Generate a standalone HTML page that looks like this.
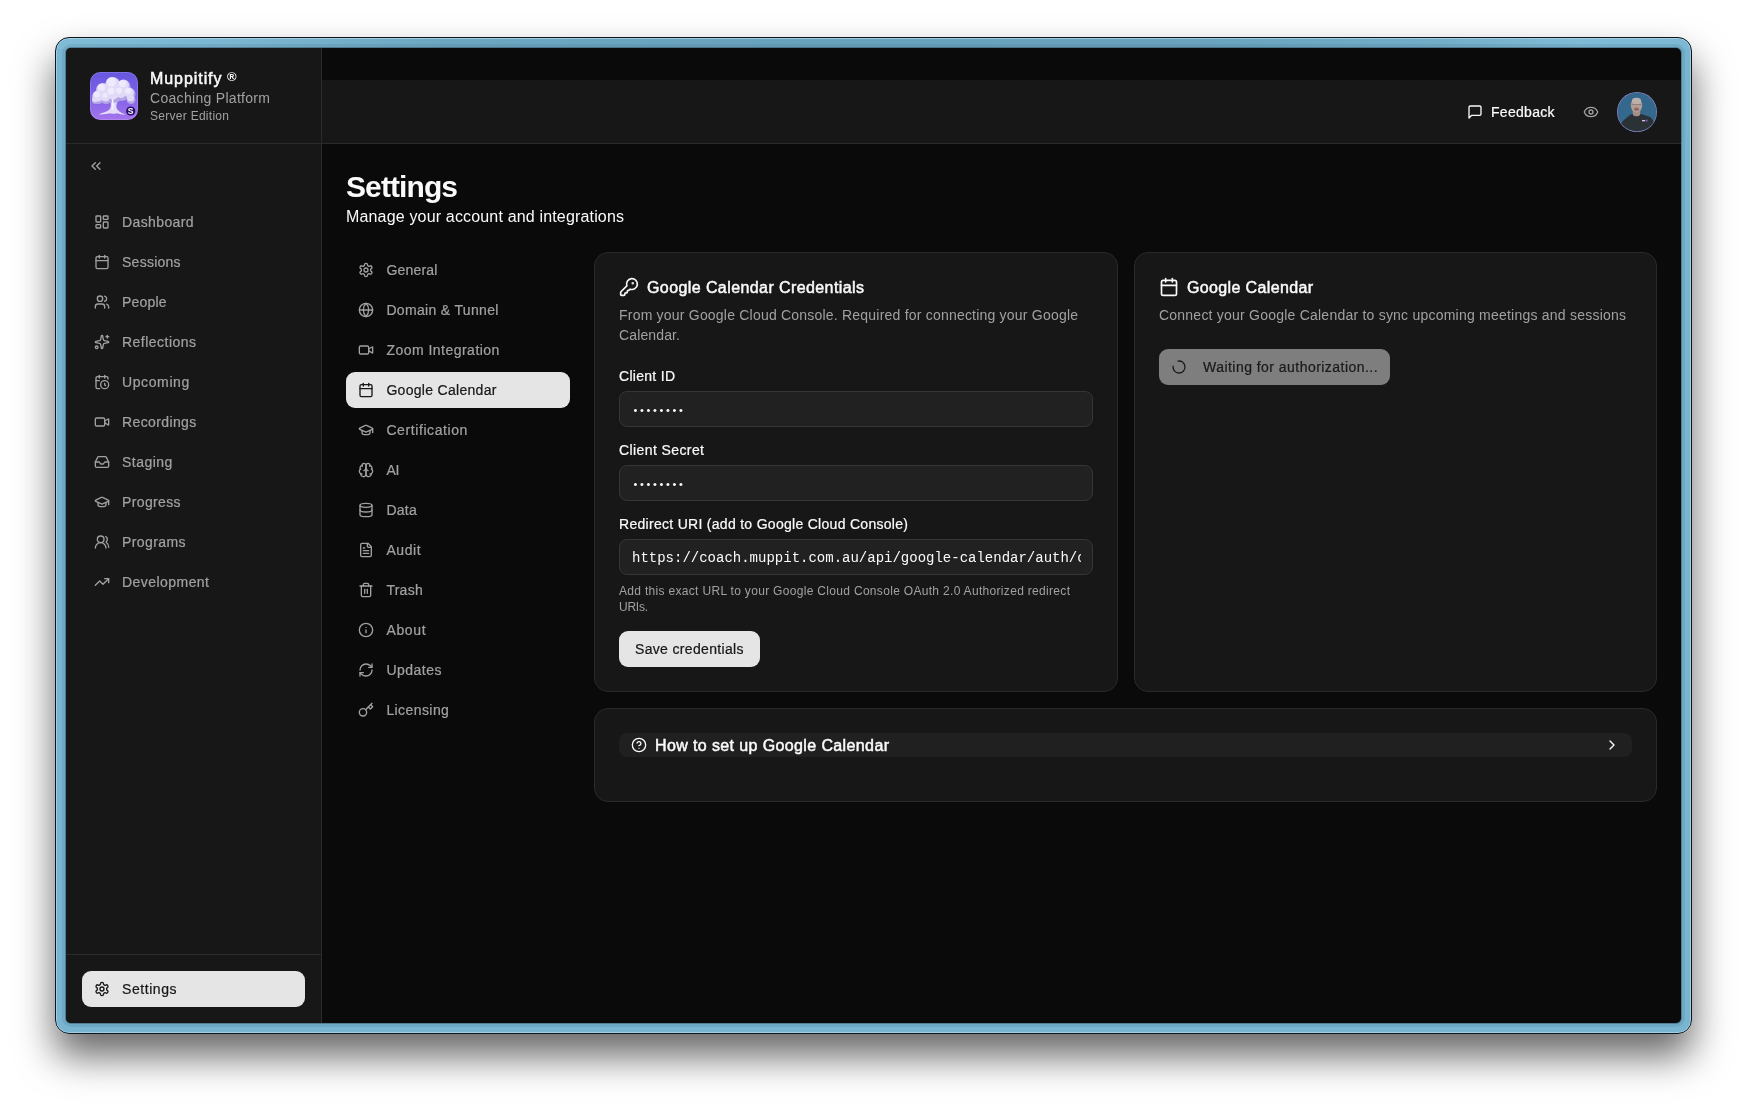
<!DOCTYPE html>
<html lang="en">
<head>
<meta charset="utf-8">
<title>Settings - Muppitify</title>
<style>
*{box-sizing:border-box;margin:0;padding:0}
html,body{width:1747px;height:1107px;overflow:hidden;background:#fff;font-family:"Liberation Sans",sans-serif}
body{position:relative}
svg.i{position:absolute;fill:none;stroke:currentColor;stroke-width:2;stroke-linecap:round;stroke-linejoin:round}
.t{position:absolute;white-space:nowrap;line-height:20px}
#shadow{position:absolute;left:55px;top:37px;width:1637px;height:997px;border-radius:14px;box-shadow:0 22px 38px rgba(0,0,0,.6)}
#frame{position:absolute;left:55px;top:37px;width:1637px;height:997px;border-radius:14px;background:linear-gradient(90deg,#80bbd6 0%,#7cb7d2 10%,#6da6c1 24%,#69a2bd 45%,#6aa3be 70%,#72acc7 84%,#80bbd6 93%,#7cb7d3 100%) 0 0/100% 11px no-repeat,#79b4d0;border:1px solid #10161c;box-shadow:inset 0 0 0 1px rgba(175,215,235,.75)}
#win{position:absolute;left:66px;top:48px;width:1615px;height:975px;border-radius:5px;background:#0a0a0a;overflow:hidden;color:#fafafa;box-shadow:0 0 0 1px rgba(10,30,40,.3),0 0 0 4px rgba(60,105,130,.16)}
#page{position:absolute;left:-66px;top:-48px;width:1747px;height:1107px;will-change:transform}
#side{position:absolute;left:66px;top:48px;width:256px;height:975px;background:#171717;border-right:1px solid #2b2b2b}
#sidehead{position:absolute;left:0;top:0;width:255px;height:96px;border-bottom:1px solid #2b2b2b}
#sidefoot{position:absolute;left:0;top:906px;width:255px;height:69px;border-top:1px solid #2b2b2b}
#top{position:absolute;left:322px;top:80px;width:1359px;height:64px;background:#171717;border-bottom:1px solid #2b2b2b}
.card{position:absolute;background:#171717;border:1px solid #2a2a2a;border-radius:14px}
.inp{position:absolute;background:#212121;border:1px solid #363636;border-radius:8px;height:36px}
</style>
</head>
<body>
<div id="shadow"></div>
<div id="frame"></div>
<div id="win"><div id="page">
<div id="side"><div id="sidehead"></div><div id="sidefoot"></div></div><div id="top"></div>
<svg id="logo" viewBox="0 0 48 48" style="position:absolute;left:90px;top:72px;width:48px;height:48px">
<defs><linearGradient id="lg" x1="0" y1="0" x2="0" y2="1"><stop offset="0" stop-color="#6658df"/><stop offset=".5" stop-color="#7d61e6"/><stop offset="1" stop-color="#a574ee"/></linearGradient>
<filter id="bl" x="-10%" y="-10%" width="120%" height="120%"><feGaussianBlur stdDeviation=".55"/></filter></defs>
<rect width="48" height="48" rx="10.500" fill="url(#lg)"/>
<g filter="url(#bl)">
<path d="M19.500 26C21 31 21.500 34 20 37 17 40 12 41 8.500 42.300c4.500.3 8.500-.3 11.500-1.100 2 .8 5 .8 7 .1 3 1 6 1.500 8.500 1.300C32 41 28.500 39.500 27 37c-1.500-3.500 0-7 3-10.500z" fill="#e4dbf8"/>
<g fill="#b3a4e6"><circle cx="8.500" cy="25.500" r="6.500"/><circle cx="13" cy="18.500" r="7"/><circle cx="23" cy="13.500" r="8"/><circle cx="34" cy="14.500" r="6.500"/><circle cx="39.500" cy="22" r="6"/><circle cx="41" cy="27.500" r="4.500"/><circle cx="24" cy="23" r="8"/><circle cx="32" cy="23" r="6"/><circle cx="16" cy="26.500" r="5.500"/><circle cx="5.500" cy="28.500" r="3.500"/></g>
<g fill="#e1daf7"><circle cx="8" cy="24" r="5.500"/><circle cx="12.500" cy="17" r="6"/><circle cx="22.500" cy="12" r="7"/><circle cx="33.500" cy="13" r="5.500"/><circle cx="39" cy="20.500" r="5"/><circle cx="40.500" cy="26" r="3.500"/><circle cx="23" cy="21" r="6.500"/><circle cx="31" cy="21" r="5"/><circle cx="15.500" cy="25" r="4.500"/><circle cx="5" cy="27.500" r="2.800"/></g>
<g fill="#eee9fb"><circle cx="7" cy="22.500" r="3"/><circle cx="11.500" cy="15.500" r="3.500"/><circle cx="21.500" cy="10" r="4.500"/><circle cx="32.500" cy="11.500" r="3.500"/><circle cx="38" cy="19" r="3"/><circle cx="21" cy="19" r="3.500"/><circle cx="29" cy="18.500" r="3"/><circle cx="15" cy="23.500" r="2.500"/></g>
<path d="M22.500 27c.8 4 .8 7-.2 10.500" stroke="#f6f2fd" stroke-width="1.600" fill="none"/>
</g>
<rect x=".4" y=".4" width="47.200" height="47.200" rx="10.100" fill="none" stroke="rgba(255,255,255,.22)" stroke-width=".8"/>
<circle cx="40.700" cy="39" r="4.600" fill="#2a0e66"/>
<text x="40.700" y="41.900" font-family="Liberation Sans, sans-serif" font-size="8.500" font-weight="700" fill="#fff" text-anchor="middle">S</text>
</svg>
<div class="t" id="brand" style="left:150px;top:69px;font-size:16px;font-weight:400;color:#fafafa;line-height:20px;letter-spacing:0.934px;-webkit-text-stroke:.5px #fafafa;">Muppitify</div>
<div class="t" id="reg" style="left:227px;top:67px;font-size:13px;font-weight:700;color:#fafafa;line-height:20px;letter-spacing:0.000px;">®</div>
<div class="t" id="brand2" style="left:150px;top:88px;font-size:14px;font-weight:400;color:#a1a1a1;line-height:20px;letter-spacing:0.302px;">Coaching Platform</div>
<div class="t" id="brand3" style="left:150px;top:108px;font-size:12px;font-weight:400;color:#a1a1a1;line-height:16px;letter-spacing:0.279px;">Server Edition</div>
<svg class="i" viewBox="0 0 24 24" style="left:88px;top:158px;width:16px;height:16px;color:#a1a1a1;stroke-width:2"><path d="m11 17-5-5 5-5"/><path d="m18 17-5-5 5-5"/></svg>
<svg class="i" viewBox="0 0 24 24" style="left:94px;top:214px;width:16px;height:16px;color:#a1a1a1;stroke-width:2"><rect width="7" height="9" x="3" y="3" rx="1"/><rect width="7" height="5" x="14" y="3" rx="1"/><rect width="7" height="9" x="14" y="12" rx="1"/><rect width="7" height="5" x="3" y="16" rx="1"/></svg>
<div class="t" id="s0" style="left:122px;top:212px;font-size:14px;font-weight:500;color:#a1a1a1;line-height:20px;letter-spacing:0.387px;-webkit-text-stroke:.22px #a1a1a1;">Dashboard</div>
<svg class="i" viewBox="0 0 24 24" style="left:94px;top:254px;width:16px;height:16px;color:#a1a1a1;stroke-width:2"><path d="M8 2v4"/><path d="M16 2v4"/><rect width="18" height="18" x="3" y="4" rx="2"/><path d="M3 10h18"/></svg>
<div class="t" id="s1" style="left:122px;top:252px;font-size:14px;font-weight:500;color:#a1a1a1;line-height:20px;letter-spacing:0.255px;-webkit-text-stroke:.22px #a1a1a1;">Sessions</div>
<svg class="i" viewBox="0 0 24 24" style="left:94px;top:294px;width:16px;height:16px;color:#a1a1a1;stroke-width:2"><path d="M16 21v-2a4 4 0 0 0-4-4H6a4 4 0 0 0-4 4v2"/><circle cx="9" cy="7" r="4"/><path d="M22 21v-2a4 4 0 0 0-3-3.870"/><path d="M16 3.130a4 4 0 0 1 0 7.750"/></svg>
<div class="t" id="s2" style="left:122px;top:292px;font-size:14px;font-weight:500;color:#a1a1a1;line-height:20px;letter-spacing:0.201px;-webkit-text-stroke:.22px #a1a1a1;">People</div>
<svg class="i" viewBox="0 0 24 24" style="left:94px;top:334px;width:16px;height:16px;color:#a1a1a1;stroke-width:2"><path d="M11.017 2.814a1 1 0 0 1 1.966 0l1.051 5.558a2 2 0 0 0 1.594 1.594l5.558 1.051a1 1 0 0 1 0 1.966l-5.558 1.051a2 2 0 0 0-1.594 1.594l-1.051 5.558a1 1 0 0 1-1.966 0l-1.051-5.558a2 2 0 0 0-1.594-1.594l-5.558-1.051a1 1 0 0 1 0-1.966l5.558-1.051a2 2 0 0 0 1.594-1.594z"/><path d="M20 2v4"/><path d="M22 4h-4"/><circle cx="4" cy="20" r="2"/></svg>
<div class="t" id="s3" style="left:122px;top:332px;font-size:14px;font-weight:500;color:#a1a1a1;line-height:20px;letter-spacing:0.473px;-webkit-text-stroke:.22px #a1a1a1;">Reflections</div>
<svg class="i" viewBox="0 0 24 24" style="left:94px;top:374px;width:16px;height:16px;color:#a1a1a1;stroke-width:2"><path d="M21 7.500V6a2 2 0 0 0-2-2H5a2 2 0 0 0-2 2v14a2 2 0 0 0 2 2h3.500"/><path d="M16 2v4"/><path d="M8 2v4"/><path d="M3 10h5"/><path d="M17.500 17.500 16 16.300V14"/><circle cx="16" cy="16" r="6"/></svg>
<div class="t" id="s4" style="left:122px;top:372px;font-size:14px;font-weight:500;color:#a1a1a1;line-height:20px;letter-spacing:0.610px;-webkit-text-stroke:.22px #a1a1a1;">Upcoming</div>
<svg class="i" viewBox="0 0 24 24" style="left:94px;top:414px;width:16px;height:16px;color:#a1a1a1;stroke-width:2"><path d="m16 13 5.223 3.482a.5.5 0 0 0 .777-.416V7.870a.5.5 0 0 0-.752-.432L16 10.500"/><rect x="2" y="6" width="14" height="12" rx="2"/></svg>
<div class="t" id="s5" style="left:122px;top:412px;font-size:14px;font-weight:500;color:#a1a1a1;line-height:20px;letter-spacing:0.386px;-webkit-text-stroke:.22px #a1a1a1;">Recordings</div>
<svg class="i" viewBox="0 0 24 24" style="left:94px;top:454px;width:16px;height:16px;color:#a1a1a1;stroke-width:2"><polyline points="22 12 16 12 14 15 10 15 8 12 2 12"/><path d="M5.450 5.110 2 12v6a2 2 0 0 0 2 2h16a2 2 0 0 0 2-2v-6l-3.450-6.890A2 2 0 0 0 16.760 4H7.240a2 2 0 0 0-1.790 1.110z"/></svg>
<div class="t" id="s6" style="left:122px;top:452px;font-size:14px;font-weight:500;color:#a1a1a1;line-height:20px;letter-spacing:0.469px;-webkit-text-stroke:.22px #a1a1a1;">Staging</div>
<svg class="i" viewBox="0 0 24 24" style="left:94px;top:494px;width:16px;height:16px;color:#a1a1a1;stroke-width:2"><path d="M21.420 10.922a1 1 0 0 0-.019-1.838L12.830 5.180a2 2 0 0 0-1.660 0L2.600 9.080a1 1 0 0 0 0 1.832l8.570 3.908a2 2 0 0 0 1.660 0z"/><path d="M22 10v6"/><path d="M6 12.500V16a6 3 0 0 0 12 0v-3.500"/></svg>
<div class="t" id="s7" style="left:122px;top:492px;font-size:14px;font-weight:500;color:#a1a1a1;line-height:20px;letter-spacing:0.367px;-webkit-text-stroke:.22px #a1a1a1;">Progress</div>
<svg class="i" viewBox="0 0 24 24" style="left:94px;top:534px;width:16px;height:16px;color:#a1a1a1;stroke-width:2"><path d="M18 21a8 8 0 0 0-16 0"/><circle cx="10" cy="8" r="5"/><path d="M22 20c0-3.370-2-6.500-4-8a5 5 0 0 0-.450-8.300"/></svg>
<div class="t" id="s8" style="left:122px;top:532px;font-size:14px;font-weight:500;color:#a1a1a1;line-height:20px;letter-spacing:0.416px;-webkit-text-stroke:.22px #a1a1a1;">Programs</div>
<svg class="i" viewBox="0 0 24 24" style="left:94px;top:574px;width:16px;height:16px;color:#a1a1a1;stroke-width:2"><polyline points="22 7 13.500 15.500 8.500 10.500 2 17"/><polyline points="16 7 22 7 22 13"/></svg>
<div class="t" id="s9" style="left:122px;top:572px;font-size:14px;font-weight:500;color:#a1a1a1;line-height:20px;letter-spacing:0.450px;-webkit-text-stroke:.22px #a1a1a1;">Development</div>
<div style="position:absolute;left:82px;top:971px;width:223px;height:36px;border-radius:9px;background:#e5e5e5"></div>
<svg class="i" viewBox="0 0 24 24" style="left:94px;top:981px;width:16px;height:16px;color:#171717;stroke-width:2"><path d="M12.220 2h-.440a2 2 0 0 0-2 2v.180a2 2 0 0 1-1 1.730l-.430.250a2 2 0 0 1-2 0l-.150-.080a2 2 0 0 0-2.730.730l-.220.380a2 2 0 0 0 .730 2.730l.150.100a2 2 0 0 1 1 1.720v.510a2 2 0 0 1-1 1.740l-.150.090a2 2 0 0 0-.730 2.730l.220.380a2 2 0 0 0 2.730.730l.150-.080a2 2 0 0 1 2 0l.430.250a2 2 0 0 1 1 1.730V20a2 2 0 0 0 2 2h.440a2 2 0 0 0 2-2v-.180a2 2 0 0 1 1-1.730l.430-.250a2 2 0 0 1 2 0l.150.080a2 2 0 0 0 2.730-.730l.220-.390a2 2 0 0 0-.730-2.730l-.150-.080a2 2 0 0 1-1-1.740v-.500a2 2 0 0 1 1-1.740l.150-.090a2 2 0 0 0 .730-2.730l-.220-.380a2 2 0 0 0-2.730-.730l-.150.080a2 2 0 0 1-2 0l-.430-.250a2 2 0 0 1-1-1.730V4a2 2 0 0 0-2-2z"/><circle cx="12" cy="12" r="3"/></svg>
<div class="t" id="sset" style="left:122px;top:979px;font-size:14px;font-weight:500;color:#171717;line-height:20px;letter-spacing:0.558px;-webkit-text-stroke:.22px #171717;">Settings</div>
<svg class="i" viewBox="0 0 24 24" style="left:1466.5px;top:104px;width:16px;height:16px;color:#fafafa;stroke-width:2"><path d="M21 15a2 2 0 0 1-2 2H7l-4 4V5a2 2 0 0 1 2-2h14a2 2 0 0 1 2 2z"/></svg>
<div class="t" id="feedback" style="left:1491px;top:102px;font-size:14px;font-weight:500;color:#fafafa;line-height:20px;letter-spacing:0.288px;-webkit-text-stroke:.22px #fafafa;">Feedback</div>
<svg class="i" viewBox="0 0 24 24" style="left:1583px;top:104px;width:16px;height:16px;color:#a1a1a1;stroke-width:2"><path d="M2.062 12.348a1 1 0 0 1 0-.696 10.750 10.750 0 0 1 19.876 0 1 1 0 0 1 0 .696 10.750 10.750 0 0 1-19.876 0"/><circle cx="12" cy="12" r="3"/></svg>
<svg id="avatar" viewBox="0 0 40 40" style="position:absolute;left:1617px;top:92px;width:40px;height:40px">
<defs><clipPath id="ac"><circle cx="20" cy="20" r="19.300"/></clipPath><filter id="ab" x="-10%" y="-10%" width="120%" height="120%"><feGaussianBlur stdDeviation=".5"/></filter></defs>
<circle cx="20" cy="20" r="20" fill="#8c84c8"/>
<g clip-path="url(#ac)"><rect width="40" height="40" fill="#35688d"/>
<g filter="url(#ab)">
<path d="M2 41C2.500 34 4 30.500 7 28L13.500 22.600 16 21.800c1.500 2.600 6 2.600 7.500 0L26 22.400 33 25C36.500 27 38 33 38 41z" fill="#2c3036"/>
<path d="M15.800 18h7.400v4.800c-1.500 2-5.900 2-7.400 0z" fill="#a18e87"/>
<ellipse cx="19.500" cy="13.400" rx="5.700" ry="7.300" fill="#b29c93"/>
<ellipse cx="19.500" cy="9" rx="4.600" ry="3.200" fill="#bcb0ab"/>
<path d="M14.500 12.500h10" stroke="#7d7475" stroke-width=".7"/>
<ellipse cx="19.500" cy="17.200" rx="2.600" ry="1.600" fill="#8a6b63"/>
<rect x="25" y="28" width="3.200" height="1.300" fill="#c9c9d8"/><rect x="28.700" y="27.600" width="2" height="2" fill="#7a4fb0"/>
</g></g></svg>
<div class="t" id="h1" style="left:346px;top:169px;font-size:30px;font-weight:700;color:#fafafa;line-height:36px;letter-spacing:-0.908px;">Settings</div>
<div class="t" id="sub" style="left:346px;top:205px;font-size:16px;font-weight:400;color:#fafafa;line-height:24px;letter-spacing:0.166px;">Manage your account and integrations</div>
<div style="position:absolute;left:346px;top:372px;width:224px;height:36px;border-radius:9px;background:#e5e5e5"></div>
<svg class="i" viewBox="0 0 24 24" style="left:358px;top:262px;width:16px;height:16px;color:#a1a1a1;stroke-width:2"><path d="M12.220 2h-.440a2 2 0 0 0-2 2v.180a2 2 0 0 1-1 1.730l-.430.250a2 2 0 0 1-2 0l-.150-.080a2 2 0 0 0-2.730.730l-.220.380a2 2 0 0 0 .730 2.730l.150.100a2 2 0 0 1 1 1.720v.510a2 2 0 0 1-1 1.740l-.150.090a2 2 0 0 0-.730 2.730l.220.380a2 2 0 0 0 2.730.730l.150-.080a2 2 0 0 1 2 0l.430.250a2 2 0 0 1 1 1.730V20a2 2 0 0 0 2 2h.440a2 2 0 0 0 2-2v-.180a2 2 0 0 1 1-1.730l.430-.250a2 2 0 0 1 2 0l.150.080a2 2 0 0 0 2.730-.730l.220-.390a2 2 0 0 0-.730-2.730l-.150-.080a2 2 0 0 1-1-1.740v-.500a2 2 0 0 1 1-1.740l.150-.090a2 2 0 0 0 .730-2.730l-.220-.380a2 2 0 0 0-2.730-.730l-.150.080a2 2 0 0 1-2 0l-.430-.250a2 2 0 0 1-1-1.730V4a2 2 0 0 0-2-2z"/><circle cx="12" cy="12" r="3"/></svg>
<div class="t" id="n0" style="left:386.4px;top:260px;font-size:14px;font-weight:500;color:#a1a1a1;line-height:20px;letter-spacing:0.198px;-webkit-text-stroke:.22px #a1a1a1;">General</div>
<svg class="i" viewBox="0 0 24 24" style="left:358px;top:302px;width:16px;height:16px;color:#a1a1a1;stroke-width:2"><circle cx="12" cy="12" r="10"/><path d="M12 2a14.500 14.500 0 0 0 0 20 14.500 14.500 0 0 0 0-20"/><path d="M2 12h20"/></svg>
<div class="t" id="n1" style="left:386.4px;top:300px;font-size:14px;font-weight:500;color:#a1a1a1;line-height:20px;letter-spacing:0.328px;-webkit-text-stroke:.22px #a1a1a1;">Domain &amp; Tunnel</div>
<svg class="i" viewBox="0 0 24 24" style="left:358px;top:342px;width:16px;height:16px;color:#a1a1a1;stroke-width:2"><path d="m16 13 5.223 3.482a.5.5 0 0 0 .777-.416V7.870a.5.5 0 0 0-.752-.432L16 10.500"/><rect x="2" y="6" width="14" height="12" rx="2"/></svg>
<div class="t" id="n2" style="left:386.4px;top:340px;font-size:14px;font-weight:500;color:#a1a1a1;line-height:20px;letter-spacing:0.477px;-webkit-text-stroke:.22px #a1a1a1;">Zoom Integration</div>
<svg class="i" viewBox="0 0 24 24" style="left:358px;top:382px;width:16px;height:16px;color:#171717;stroke-width:2"><path d="M8 2v4"/><path d="M16 2v4"/><rect width="18" height="18" x="3" y="4" rx="2"/><path d="M3 10h18"/></svg>
<div class="t" id="n3" style="left:386.4px;top:380px;font-size:14px;font-weight:500;color:#171717;line-height:20px;letter-spacing:0.296px;-webkit-text-stroke:.22px #171717;">Google Calendar</div>
<svg class="i" viewBox="0 0 24 24" style="left:358px;top:422px;width:16px;height:16px;color:#a1a1a1;stroke-width:2"><path d="M21.420 10.922a1 1 0 0 0-.019-1.838L12.830 5.180a2 2 0 0 0-1.660 0L2.600 9.080a1 1 0 0 0 0 1.832l8.570 3.908a2 2 0 0 0 1.660 0z"/><path d="M22 10v6"/><path d="M6 12.500V16a6 3 0 0 0 12 0v-3.500"/></svg>
<div class="t" id="n4" style="left:386.4px;top:420px;font-size:14px;font-weight:500;color:#a1a1a1;line-height:20px;letter-spacing:0.590px;-webkit-text-stroke:.22px #a1a1a1;">Certification</div>
<svg class="i" viewBox="0 0 24 24" style="left:358px;top:462px;width:16px;height:16px;color:#a1a1a1;stroke-width:2"><path d="M12 5a3 3 0 1 0-5.997.125 4 4 0 0 0-2.526 5.770 4 4 0 0 0 .556 6.588A4 4 0 1 0 12 18Z"/><path d="M12 5a3 3 0 1 1 5.997.125 4 4 0 0 1 2.526 5.770 4 4 0 0 1-.556 6.588A4 4 0 1 1 12 18Z"/><path d="M15 13a4.500 4.500 0 0 1-3-4 4.500 4.500 0 0 1-3 4"/><path d="M17.599 6.500a3 3 0 0 0 .399-1.375"/><path d="M6.003 5.125A3 3 0 0 0 6.401 6.500"/><path d="M3.477 10.896a4 4 0 0 1 .585-.396"/><path d="M19.938 10.500a4 4 0 0 1 .585.396"/><path d="M6 18a4 4 0 0 1-1.967-.516"/><path d="M19.967 17.484A4 4 0 0 1 18 18"/></svg>
<div class="t" id="n5" style="left:386.4px;top:460px;font-size:14px;font-weight:500;color:#a1a1a1;line-height:20px;letter-spacing:-0.234px;-webkit-text-stroke:.22px #a1a1a1;">AI</div>
<svg class="i" viewBox="0 0 24 24" style="left:358px;top:502px;width:16px;height:16px;color:#a1a1a1;stroke-width:2"><ellipse cx="12" cy="5" rx="9" ry="3"/><path d="M3 5V19A9 3 0 0 0 21 19V5"/><path d="M3 12A9 3 0 0 0 21 12"/></svg>
<div class="t" id="n6" style="left:386.4px;top:500px;font-size:14px;font-weight:500;color:#a1a1a1;line-height:20px;letter-spacing:0.241px;-webkit-text-stroke:.22px #a1a1a1;">Data</div>
<svg class="i" viewBox="0 0 24 24" style="left:358px;top:542px;width:16px;height:16px;color:#a1a1a1;stroke-width:2"><path d="M15 2H6a2 2 0 0 0-2 2v16a2 2 0 0 0 2 2h12a2 2 0 0 0 2-2V7Z"/><path d="M14 2v4a2 2 0 0 0 2 2h4"/><path d="M10 9H8"/><path d="M16 13H8"/><path d="M16 17H8"/></svg>
<div class="t" id="n7" style="left:386.4px;top:540px;font-size:14px;font-weight:500;color:#a1a1a1;line-height:20px;letter-spacing:0.570px;-webkit-text-stroke:.22px #a1a1a1;">Audit</div>
<svg class="i" viewBox="0 0 24 24" style="left:358px;top:582px;width:16px;height:16px;color:#a1a1a1;stroke-width:2"><path d="M3 6h18"/><path d="M19 6v14c0 1-1 2-2 2H7c-1 0-2-1-2-2V6"/><path d="M8 6V4c0-1 1-2 2-2h4c1 0 2 1 2 2v2"/><path d="M10 11v6"/><path d="M14 11v6"/></svg>
<div class="t" id="n8" style="left:386.4px;top:580px;font-size:14px;font-weight:500;color:#a1a1a1;line-height:20px;letter-spacing:0.255px;-webkit-text-stroke:.22px #a1a1a1;">Trash</div>
<svg class="i" viewBox="0 0 24 24" style="left:358px;top:622px;width:16px;height:16px;color:#a1a1a1;stroke-width:2"><circle cx="12" cy="12" r="10"/><path d="M12 16v-4"/><path d="M12 8h.01"/></svg>
<div class="t" id="n9" style="left:386.4px;top:620px;font-size:14px;font-weight:500;color:#a1a1a1;line-height:20px;letter-spacing:0.677px;-webkit-text-stroke:.22px #a1a1a1;">About</div>
<svg class="i" viewBox="0 0 24 24" style="left:358px;top:662px;width:16px;height:16px;color:#a1a1a1;stroke-width:2"><path d="M3 12a9 9 0 0 1 9-9 9.750 9.750 0 0 1 6.740 2.740L21 8"/><path d="M21 3v5h-5"/><path d="M21 12a9 9 0 0 1-9 9 9.750 9.750 0 0 1-6.740-2.740L3 16"/><path d="M8 16H3v5"/></svg>
<div class="t" id="n10" style="left:386.4px;top:660px;font-size:14px;font-weight:500;color:#a1a1a1;line-height:20px;letter-spacing:0.491px;-webkit-text-stroke:.22px #a1a1a1;">Updates</div>
<svg class="i" viewBox="0 0 24 24" style="left:358px;top:702px;width:16px;height:16px;color:#a1a1a1;stroke-width:2"><circle cx="7.500" cy="15.500" r="5.500"/><path d="m21 2-9.600 9.600"/><path d="m15.500 7.500 3 3L22 7l-3-3"/></svg>
<div class="t" id="n11" style="left:386.4px;top:700px;font-size:14px;font-weight:500;color:#a1a1a1;line-height:20px;letter-spacing:0.418px;-webkit-text-stroke:.22px #a1a1a1;">Licensing</div>
<div class="card" style="left:594px;top:252px;width:524px;height:440px"></div>
<svg class="i" viewBox="0 0 24 24" style="left:619px;top:277px;width:20px;height:20px;color:#fafafa;stroke-width:2"><path d="M2.586 17.414A2 2 0 0 0 2 18.828V21a1 1 0 0 0 1 1h3a1 1 0 0 0 1-1v-1a1 1 0 0 1 1-1h1a1 1 0 0 0 1-1v-1a1 1 0 0 1 1-1h.172a2 2 0 0 0 1.414-.586l.814-.814a6.500 6.500 0 1 0-4-4z"/><circle cx="16.500" cy="7.500" r=".5" fill="currentColor"/></svg>
<div class="t" id="c1t" style="left:647px;top:276px;font-size:16px;font-weight:400;color:#fafafa;line-height:24px;letter-spacing:0.410px;-webkit-text-stroke:.5px #fafafa;">Google Calendar Credentials</div>
<div class="t" id="c1d1" style="left:619px;top:305px;font-size:14px;font-weight:400;color:#a1a1a1;line-height:20px;letter-spacing:0.210px;">From your Google Cloud Console. Required for connecting your Google</div>
<div class="t" id="c1d2" style="left:619px;top:325px;font-size:14px;font-weight:400;color:#a1a1a1;line-height:20px;letter-spacing:0.133px;">Calendar.</div>
<div class="t" id="l1" style="left:619px;top:366px;font-size:14px;font-weight:500;color:#fafafa;line-height:20px;letter-spacing:0.289px;-webkit-text-stroke:.22px #fafafa;">Client ID</div>
<div class="inp" style="left:619px;top:391px;width:474px"></div>
<div class="t" id="p1" style="left:633.5px;top:400.2px;font-size:11px;font-weight:400;color:#fafafa;line-height:20px;letter-spacing:2.655px;">••••••••</div>
<div class="t" id="l2" style="left:619px;top:440px;font-size:14px;font-weight:500;color:#fafafa;line-height:20px;letter-spacing:0.404px;-webkit-text-stroke:.22px #fafafa;">Client Secret</div>
<div class="inp" style="left:619px;top:465px;width:474px"></div>
<div class="t" id="p2" style="left:633.5px;top:474.2px;font-size:11px;font-weight:400;color:#fafafa;line-height:20px;letter-spacing:2.655px;">••••••••</div>
<div class="t" id="l3" style="left:619px;top:514px;font-size:14px;font-weight:500;color:#fafafa;line-height:20px;letter-spacing:0.292px;-webkit-text-stroke:.22px #fafafa;">Redirect URI (add to Google Cloud Console)</div>
<div class="inp" style="left:619px;top:539px;width:474px"></div>
<div style="position:absolute;left:632px;top:547px;width:449px;height:20px;overflow:hidden">
<div class="t" id="uri" style="left:0px;top:1px;font-size:14px;font-weight:400;color:#fafafa;line-height:20px;letter-spacing:0.000px;font-family:'Liberation Mono',monospace;">https://coach.muppit.com.au/api/google-calendar/auth/callback</div>
</div>
<div class="t" id="h1a" style="left:619px;top:583px;font-size:12px;font-weight:400;color:#a1a1a1;line-height:16px;letter-spacing:0.314px;">Add this exact URL to your Google Cloud Console OAuth 2.0 Authorized redirect</div>
<div class="t" id="h1b" style="left:619px;top:599px;font-size:12px;font-weight:400;color:#a1a1a1;line-height:16px;letter-spacing:-0.250px;">URIs.</div>
<div style="position:absolute;left:619px;top:631px;width:141px;height:36px;border-radius:9px;background:#e5e5e5"></div>
<div class="t" id="save" style="left:635px;top:639px;font-size:14px;font-weight:500;color:#171717;line-height:20px;letter-spacing:0.332px;-webkit-text-stroke:.22px #171717;">Save credentials</div>
<div class="card" style="left:1134px;top:252px;width:523px;height:440px"></div>
<svg class="i" viewBox="0 0 24 24" style="left:1159px;top:277px;width:20px;height:20px;color:#fafafa;stroke-width:2"><path d="M8 2v4"/><path d="M16 2v4"/><rect width="18" height="18" x="3" y="4" rx="2"/><path d="M3 10h18"/></svg>
<div class="t" id="c2t" style="left:1187px;top:276px;font-size:16px;font-weight:400;color:#fafafa;line-height:24px;letter-spacing:0.359px;-webkit-text-stroke:.5px #fafafa;">Google Calendar</div>
<div class="t" id="c2d" style="left:1159px;top:305px;font-size:14px;font-weight:400;color:#a1a1a1;line-height:20px;letter-spacing:0.225px;">Connect your Google Calendar to sync upcoming meetings and sessions</div>
<div style="position:absolute;left:1159px;top:349px;width:231px;height:36px;border-radius:9px;background:#7e7e7e"></div>
<svg class="i" viewBox="0 0 24 24" style="left:1171px;top:359px;width:16px;height:16px;color:#1c1c1c;stroke-width:2;transform:rotate(-100deg)"><path d="M21 12a9 9 0 1 1-6.219-8.560"/></svg>
<div class="t" id="wait" style="left:1203px;top:357px;font-size:14px;font-weight:500;color:#1a1a1a;line-height:20px;letter-spacing:0.462px;-webkit-text-stroke:.22px #1a1a1a;">Waiting for authorization...</div>
<div class="card" style="left:594px;top:708px;width:1063px;height:94px"></div>
<div style="position:absolute;left:619px;top:733px;width:1013px;height:24px;border-radius:8px;background:#202020"></div>
<svg class="i" viewBox="0 0 24 24" style="left:631px;top:737px;width:16px;height:16px;color:#fafafa;stroke-width:2"><circle cx="12" cy="12" r="10"/><path d="M9.090 9a3 3 0 0 1 5.830 1c0 2-3 3-3 3"/><path d="M12 17h.01"/></svg>
<div class="t" id="how" style="left:655px;top:734px;font-size:16px;font-weight:400;color:#fafafa;line-height:24px;letter-spacing:0.384px;-webkit-text-stroke:.5px #fafafa;">How to set up Google Calendar</div>
<svg class="i" viewBox="0 0 24 24" style="left:1604px;top:737px;width:16px;height:16px;color:#fafafa;stroke-width:2"><path d="m9 18 6-6-6-6"/></svg>
</div></div>
</body>
</html>
